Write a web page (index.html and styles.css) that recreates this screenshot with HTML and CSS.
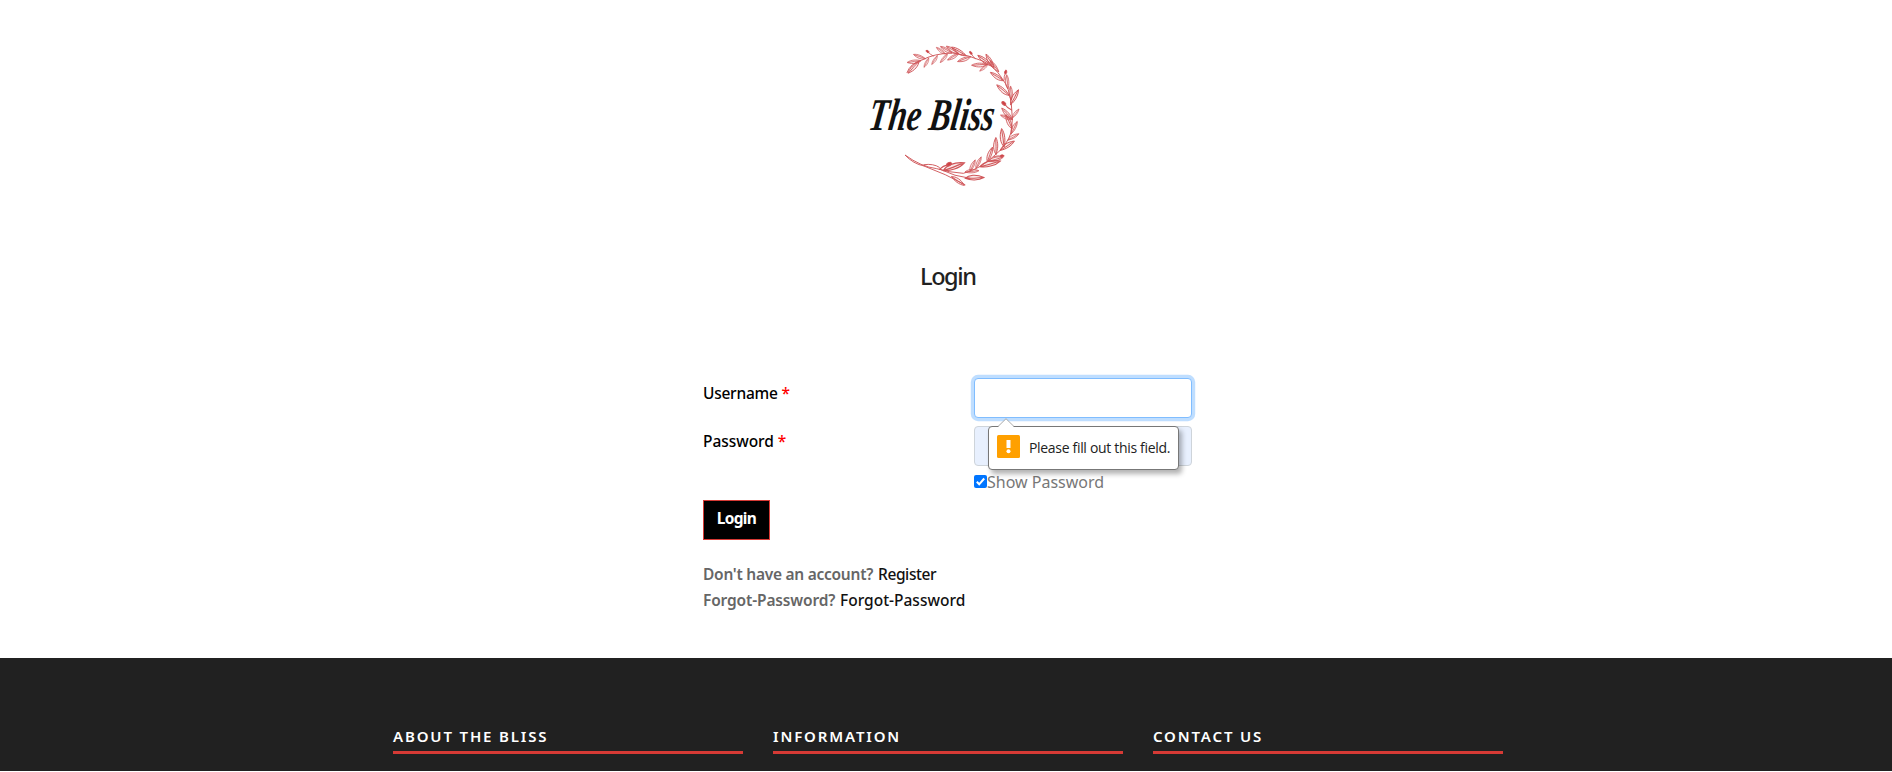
FILE: index.html
```html
<!DOCTYPE html>
<html lang="en">
<head>
<meta charset="utf-8">
<title>The Bliss - Login</title>
<link rel="stylesheet" href="styles.css">
</head>
<body>
<header class="brand">
<svg class="logo" viewBox="0 0 570 510" role="img" aria-label="The Bliss">
<defs>
<path id="leaf" d="M0 0C8-8 24-11 42-4C30 4 12 4 0 0Q20-1 38-4"/>
<g id="bud"><path d="M0 0Q10-3 20 0"/><ellipse class="berry" cx="22" cy="0" rx="5" ry="3"/></g>
</defs>
<g class="wreath">
<path class="stem" d="M171 128Q181 100 214 91Q252 70 308 69Q358 75 398 93Q435 110 456 145Q479 174 484 222Q490 270 484 306Q470 348 435 375Q394 416 340 430Q295 427 260 416Q213 410 165 375Q190 402 222 408"/>
<path class="stem" d="M222 408Q288 432 345 464M270 418Q315 440 360 445M222 404Q250 400 268 412"/>
<use href="#leaf" transform="translate(213 92) rotate(178)"/>
<use href="#leaf" transform="translate(207 94) rotate(138) scale(1.15)"/>
<use href="#leaf" transform="translate(226 86) rotate(205) scale(.9)"/>
<use href="#leaf" transform="translate(236 84) rotate(122) scale(.75)"/>
<use href="#bud" transform="translate(250 78) rotate(218)"/>
<use href="#leaf" transform="translate(262 77) rotate(128) scale(.75)"/>
<use href="#leaf" transform="translate(286 72) rotate(222) scale(.8)"/>
<use href="#leaf" transform="translate(292 72) rotate(135) scale(.8)"/>
<use href="#leaf" transform="translate(306 69) rotate(215) scale(.95)"/>
<use href="#leaf" transform="translate(325 70) rotate(216)"/>
<use href="#leaf" transform="translate(348 77) rotate(216) scale(1.2)"/>
<use href="#leaf" transform="translate(325 71) rotate(155) scale(.9)"/>
<use href="#leaf" transform="translate(362 80) rotate(165)"/>
<use href="#bud" transform="translate(376 86) rotate(232)"/>
<use href="#leaf" transform="translate(411 103) rotate(182) scale(1.1)"/>
<use href="#leaf" transform="translate(413 103) rotate(145) scale(.75)"/>
<use href="#leaf" transform="translate(424 106) rotate(222) scale(1.2)"/>
<use href="#leaf" transform="translate(432 112) rotate(244) scale(1.1)"/>
<use href="#leaf" transform="translate(446 125) rotate(238)"/>
<use href="#leaf" transform="translate(460 152) rotate(218) scale(1.1)"/>
<use href="#bud" transform="translate(462 150) rotate(282) scale(1.1)"/>
<use href="#leaf" transform="translate(477 196) rotate(226) scale(1.15)"/>
<use href="#leaf" transform="translate(474 176) rotate(270)"/>
<use href="#leaf" transform="translate(482 224) rotate(303) scale(1.2)"/>
<use href="#leaf" transform="translate(484 210) rotate(272)"/>
<use href="#bud" transform="translate(485 240) rotate(220) scale(1.4)"/>
<use href="#leaf" transform="translate(487 268) rotate(205) scale(.9)"/>
<use href="#leaf" transform="translate(487 268) rotate(232) scale(1.1)"/>
<use href="#leaf" transform="translate(487 264) rotate(312) scale(.8)"/>
<use href="#leaf" transform="translate(486 296) rotate(252) scale(1.1)"/>
<use href="#leaf" transform="translate(483 312) rotate(302)"/>
<use href="#leaf" transform="translate(474 330) rotate(336) scale(.9)"/>
<use href="#leaf" transform="translate(462 350) rotate(268) scale(1.3)"/>
<use href="#leaf" transform="translate(451 361) rotate(332) scale(1.2)"/>
<use href="#leaf" transform="translate(438 373) rotate(275) scale(1.2)"/>
<use href="#bud" transform="translate(432 380) rotate(355) scale(1.1)"/>
<use href="#leaf" transform="translate(415 394) rotate(350) scale(1.1)"/>
<use href="#leaf" transform="translate(412 395) rotate(295) scale(1.1)"/>
<use href="#leaf" transform="translate(390 410) rotate(350) scale(1.5)"/>
<use href="#leaf" transform="translate(378 415) rotate(300) scale(.9)"/>
<use href="#leaf" transform="translate(360 424) rotate(300) scale(.9)"/>
<use href="#leaf" transform="translate(345 426) rotate(0)"/>
<use href="#leaf" transform="translate(345 445) rotate(3) scale(1.35)"/>
<use href="#leaf" transform="translate(280 422) rotate(345) scale(1.6)"/>
<use href="#leaf" transform="translate(305 440) rotate(40) scale(1.1)"/>
<use href="#bud" transform="translate(268 418) rotate(332) scale(1.5)"/>
</g>
<text class="script" transform="translate(52 300) skewX(-8)" textLength="376" lengthAdjust="spacingAndGlyphs">The Bliss</text>
</svg>
</header>
<main>
<h1 class="title">Login</h1>
<form class="login">
<div class="row">
<label class="label name" for="user"><span>Username</span> <b class="req">*</b></label>
<div class="field"><input class="control focused" id="user" type="text">
<div class="tip">
<svg class="arrow" viewBox="0 0 18 10"><path d="M0 9H1L9 1L17 9H18V10H0Z" fill="#fff"/><path d="M1 8.5L9 .7L17 8.5" fill="none" stroke="#aaa"/></svg>
<svg class="warn" viewBox="0 0 23 23"><rect width="23" height="23" rx="1.5" fill="#ffa000"/><path d="M9.5 5h4v8h-4z" fill="#fff"/><circle cx="11.5" cy="16.3" r="2" fill="#fff"/></svg>
<span class="tip-text">Please fill out this field.</span>
</div></div>
</div>
<div class="row">
<label class="label pass" for="pw"><span>Password</span> <b class="req">*</b></label>
<div class="field"><input class="control filled" id="pw" type="text">
<label class="show"><svg class="check" viewBox="0 0 13 13"><rect width="13" height="13" rx="2" fill="#0075ff"/><path d="M2.8 6.8L5.2 9.3L10.2 3.5" fill="none" stroke="#fff" stroke-width="2"/></svg><span class="show-text">Show Password</span></label></div>
</div>
<button class="submit" type="button">Login</button>
<p class="links"><span class="q1">Don't have an account?</span><a class="a1">Register</a></p>
<p class="links"><span class="q2">Forgot-Password?</span><a class="a2">Forgot-Password</a></p>
</form>
</main>
<footer class="footer">
<h2 class="foot about">ABOUT THE BLISS</h2>
<h2 class="foot info">INFORMATION</h2>
<h2 class="foot contact">CONTACT US</h2>
</footer>
</body>
</html>
```
FILE: styles.css
```css
* { box-sizing: border-box; }
body { margin: 0; height: 772px; overflow: hidden; background: #fff; color: #666; font: 16px/26px "Noto Sans", sans-serif; display: flex; flex-direction: column; }
.brand { height: 200px; padding: 30px 0 0 850px; flex: none; }
.logo { display: block; width: 190px; height: 170px; }
.wreath { fill: rgba(207, 63, 67, .12); stroke: #cf5558; stroke-width: 2.2; stroke-linecap: round; }
.stem { fill: none; stroke-width: 2.8; }
.berry { fill: #cf3f43; }
.script { font: italic bold 136px "Liberation Serif", serif; fill: #111; }
main { height: 458px; flex: none; }
.title { margin: 61px 0 0 920px; font-size: 23.5px; line-height: 30px; font-weight: 500; color: #212121; letter-spacing: -1.4px; }
.login { margin: 87px 0 0 703px; width: 489px; }
.row { display: flex; height: 48px; }
.label { width: 271px; padding-top: 2px; color: #000; font-weight: 500; white-space: nowrap; }
.name { font-size: 15.5px; letter-spacing: -.25px; }
.pass { font-size: 15.5px; letter-spacing: -.05px; }
.req { color: #f00; font-weight: 500; }
.field { position: relative; width: 218px; flex: none; }
.control { display: block; width: 218px; height: 40px; padding: 6px 12px; border: 1px solid #ced4da; border-radius: 4px; background: #fff; outline: none; }
.focused { border-color: #80bdff; box-shadow: 0 0 0 3.2px rgba(0, 123, 255, .25); }
.filled { background: #e8f0fe; }
.tip { position: absolute; z-index: 2; left: 14px; top: 48px; width: 191px; height: 44px; display: flex; align-items: center; padding-left: 8px; background: #fff; border: 1px solid #777; border-radius: 4px; box-shadow: 3px 4px 5px rgba(0, 0, 0, .3); color: #222; }
.arrow { position: absolute; left: 8px; top: -9px; width: 18px; height: 10px; }
.warn { width: 23px; height: 23px; margin: -3px 9px 0 0; flex: none; }
.tip-text { font: 14px/20px "Open Sans", sans-serif; letter-spacing: -.32px; white-space: nowrap; color: #222; }
.show { display: flex; height: 26px; margin-top: 3px; align-items: center; white-space: nowrap; font-size: 16px; }
.check { width: 13px; height: 13px; flex: none; margin-top: -1px; }
.show-text { color: #777; }
.submit { display: block; width: 67px; height: 40px; margin: 26px 0 21px; padding: 0 0 4px; border: 1px solid #d63a35; background: #000; color: #fff; font: bold 15.5px "Noto Sans", sans-serif; letter-spacing: -.7px; }
.links { margin: 0; height: 26px; display: flex; gap: 5px; white-space: nowrap; font-size: 15.5px; font-weight: 600; }
.links a { color: #111; font-weight: 500; }
.q1 { width: 170px; letter-spacing: -.26px; }
.a1 { letter-spacing: -.4px; }
.q2 { width: 132px; letter-spacing: -.14px; }
.a2 { letter-spacing: 0; }
.footer { height: 113px; flex: none; padding: 68px 389px 0 393px; display: grid; grid-template-columns: repeat(3, 350px); gap: 30px; background: #212121; }
.foot { margin: 0; height: 28px; border-bottom: 3px solid #d63a35; color: #fff; font-size: 15px; line-height: 20px; font-weight: 600; letter-spacing: 1.85px; }
```
